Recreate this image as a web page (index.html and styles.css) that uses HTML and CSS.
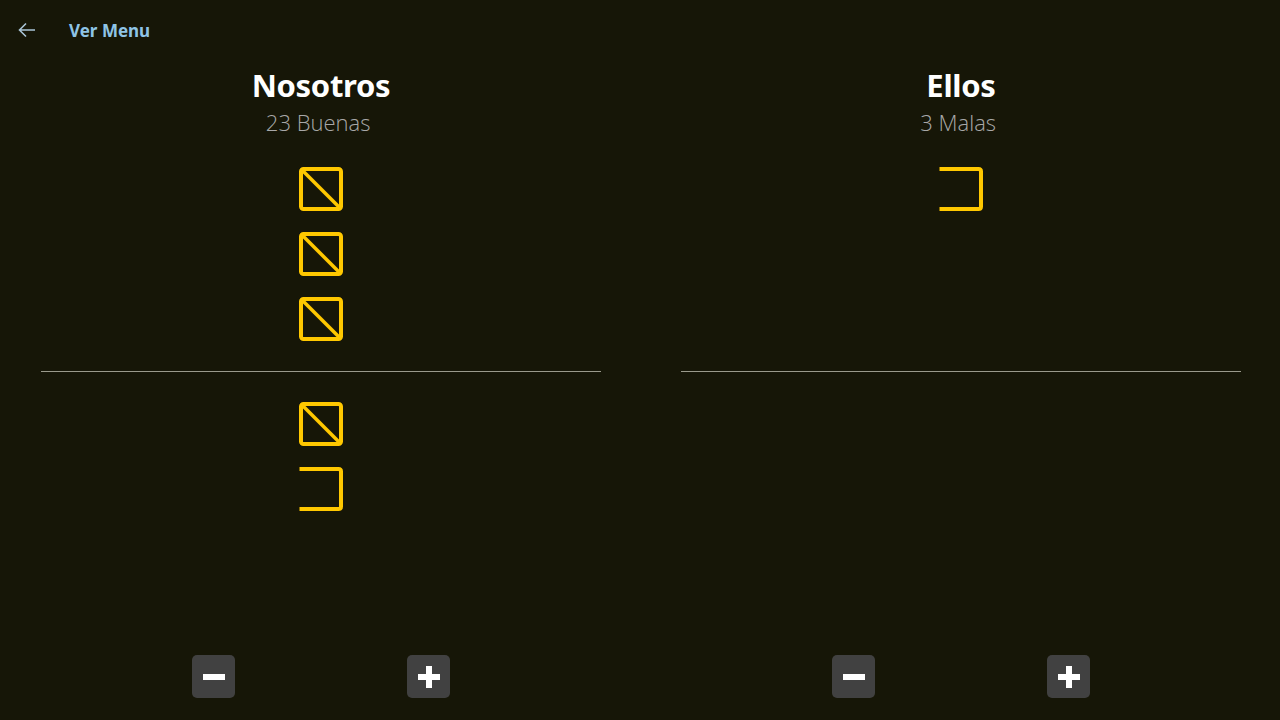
FILE: index.html
```html
<!DOCTYPE html>
<html lang="es">
<head>
<meta charset="utf-8">
<title>Marcador</title>
<link rel="stylesheet" href="styles.css">
</head>
<body>
<header class="topbar">
  <button class="back" aria-label="Volver">
    <svg width="18" height="16" viewBox="0 0 18 16"><path d="M17 8H2M8 1.5L1.5 8L8 14.5" fill="none" stroke="#a9c4d6" stroke-width="1.6"/></svg>
  </button>
  <span class="menu-link">Ver Menu</span>
</header>
<main class="board">
  <section class="team">
    <h1 class="team-name">Nosotros</h1>
    <p class="team-score">23 Buenas&nbsp;</p>
    <div class="zone zone-top">
      <svg class="box" viewBox="0 0 44 44"><rect x="2" y="2" width="40" height="40" rx="2.5"/><line x1="4" y1="4" x2="40" y2="40"/></svg>
      <svg class="box" viewBox="0 0 44 44"><rect x="2" y="2" width="40" height="40" rx="2.5"/><line x1="4" y1="4" x2="40" y2="40"/></svg>
      <svg class="box" viewBox="0 0 44 44"><rect x="2" y="2" width="40" height="40" rx="2.5"/><line x1="4" y1="4" x2="40" y2="40"/></svg>
    </div>
    <hr class="divider">
    <div class="zone zone-bottom">
      <svg class="box" viewBox="0 0 44 44"><rect x="2" y="2" width="40" height="40" rx="2.5"/><line x1="4" y1="4" x2="40" y2="40"/></svg>
      <svg class="box" viewBox="0 0 44 44"><path d="M0.5 2H39.5Q42 2 42 4.5V39.5Q42 42 39.5 42H0.5"/></svg>
    </div>
    <div class="controls">
      <button class="ctrl" aria-label="Restar"><span class="minus"></span></button>
      <button class="ctrl" aria-label="Sumar"><span class="plus"></span></button>
    </div>
  </section>
  <section class="team">
    <h1 class="team-name">Ellos</h1>
    <p class="team-score">3 Malas&nbsp;</p>
    <div class="zone zone-top">
      <svg class="box" viewBox="0 0 44 44"><path d="M0.5 2H39.5Q42 2 42 4.5V39.5Q42 42 39.5 42H0.5"/></svg>
    </div>
    <hr class="divider">
    <div class="zone zone-bottom"></div>
    <div class="controls">
      <button class="ctrl" aria-label="Restar"><span class="minus"></span></button>
      <button class="ctrl" aria-label="Sumar"><span class="plus"></span></button>
    </div>
  </section>
</main>
</body>
</html>
```
FILE: styles.css
```css
* { box-sizing: border-box; }
html, body { margin: 0; padding: 0; }
body {
  width: 1280px;
  height: 720px;
  background: #161607;
  font-family: "Noto Sans", "Open Sans", sans-serif;
  color: #fff;
  overflow: hidden;
  display: flex;
  flex-direction: column;
}
.topbar {
  height: 60px;
  display: flex;
  align-items: center;
  padding-left: 18px;
  flex: none;
}
.back {
  background: none;
  border: 0;
  padding: 0;
  width: 18px;
  height: 16px;
  display: flex;
}
.menu-link {
  margin-left: 33px;
  font-weight: 700;
  font-size: 17px;
  color: #8ec4e6;
}
.board {
  flex: 1;
  display: grid;
  grid-template-columns: 640px 640px;
}
.team {
  display: flex;
  flex-direction: column;
  align-items: center;
  padding-left: 2px;
  padding-bottom: 22px;
}
.team-name {
  margin: 7px 0 0;
  font-size: 31px;
  line-height: 36px;
  font-weight: 700;
  letter-spacing: -0.3px;
}
.team-score {
  margin: 5px 0 0;
  font-family: "Open Sans", sans-serif;
  font-weight: 300;
  font-size: 22px;
  line-height: 28px;
  color: #a8a8a8;
  white-space: pre;
}
.zone {
  display: flex;
  flex-direction: column;
  align-items: center;
  gap: 21px;
}
.zone-top {
  margin-top: 31px;
  height: 204px;
}
.zone-bottom {
  padding-top: 30px;
}
.box {
  width: 44px;
  height: 44px;
  flex: none;
  fill: none;
  stroke: #ffc800;
  stroke-width: 4;
}
.box line { stroke-width: 3.5; }
.divider {
  align-self: flex-start;
  margin: 0 0 0 39px;
  width: 560px;
  height: 1px;
  border: 0;
  background: #9a9a8c;
}
.controls {
  margin-top: auto;
  display: flex;
  gap: 172px;
}
.ctrl {
  width: 43px;
  height: 43px;
  border: 0;
  border-radius: 5px;
  background: #414141;
  position: relative;
  padding: 0;
}
.minus, .plus {
  position: absolute;
  left: 50%;
  top: 50%;
  transform: translate(-50%, -50%);
}
.minus {
  width: 22px;
  height: 6px;
  background: #fff;
}
.plus {
  width: 22px;
  height: 22px;
  background:
    linear-gradient(#fff, #fff) center / 22px 6px no-repeat,
    linear-gradient(#fff, #fff) center / 6px 22px no-repeat;
}
```
